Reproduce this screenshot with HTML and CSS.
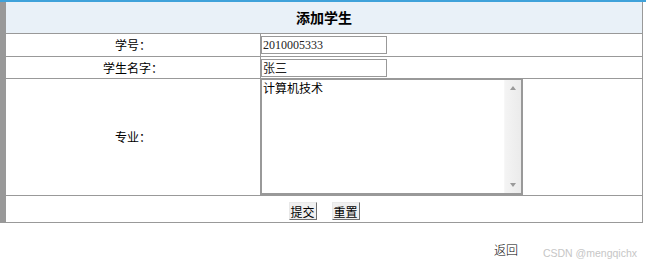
FILE: index.html
```html
<!DOCTYPE html>
<html lang="zh">
<head>
<meta charset="utf-8">
<title>添加学生</title>
<link rel="stylesheet" href="styles.css">
</head>
<body>
<div class="page">
  <form class="form">
    <table class="grid">
      <colgroup>
        <col class="col-label">
        <col class="col-field">
      </colgroup>
      <tr>
        <th class="title" colspan="2">添加学生</th>
      </tr>
      <tr class="row-a">
        <td class="label">学号：</td>
        <td class="field"><input class="text" type="text" value="2010005333"></td>
      </tr>
      <tr class="row-b">
        <td class="label">学生名字：</td>
        <td class="field"><input class="text" type="text" value="张三"></td>
      </tr>
      <tr class="row-c">
        <td class="label">专业：</td>
        <td class="field">
          <div class="area">
            <textarea class="area-input">计算机技术</textarea>
            <div class="scrollbar">
              <span class="arrow up"></span>
              <span class="arrow down"></span>
            </div>
          </div>
        </td>
      </tr>
      <tr class="row-d">
        <td class="actions" colspan="2">
          <div class="buttons">
            <button class="btn" type="submit">提交</button>
            <button class="btn" type="reset">重置</button>
          </div>
        </td>
      </tr>
    </table>
  </form>
  <div class="footer">
    <a class="back" href="#">返回</a>
    <span class="mark">CSDN @mengqichx</span>
  </div>
</div>
</body>
</html>
```

FILE: styles.css
```css
html, body {
  margin: 0;
  padding: 0;
  background: #fff;
}

body {
  font-family: "Noto Sans CJK SC", "Liberation Sans", sans-serif;
  font-size: 12px;
  color: #000;
}

.page {
  width: 646px;
  border-top: 2px solid #3fa2da;
}

.form {
  margin: 0;
}

.grid {
  border-spacing: 0;
  border-left: 6px solid #999;
  width: 643px;
  table-layout: fixed;
}

.col-label { width: 255px; }
.col-field { width: 382px; }

.grid td,
.grid th {
  padding: 0;
  border-right: 1px solid #999;
  border-bottom: 1px solid #999;
}

.title {
  height: 31px;
  background: #e9f1f8;
  font-size: 14px;
  font-weight: bold;
  text-align: center;
  line-height: 31px;
}

.label {
  text-align: center;
  line-height: 14px;
}

.field {
  text-align: left;
  vertical-align: middle;
}

.row-a td { height: 22px; }
.row-b td { height: 21px; }
.row-c td { height: 116px; }
.row-d td { height: 26px; }

.text {
  display: block;
  box-sizing: border-box;
  width: 126px;
  height: 18px;
  margin: 0;
  padding: 0 1px;
  border: 1px solid #999;
  font-family: "Liberation Serif", "Noto Sans CJK SC", serif;
  font-size: 12px;
  color: #222;
  background: #fff;
  outline: none;
}

.row-b .text {
  font-family: "Noto Sans CJK SC", sans-serif;
}

.area {
  display: flex;
  box-sizing: border-box;
  width: 262px;
  height: 116px;
  border: 1px solid #999;
  border-bottom-width: 2px;
  border-right-width: 2px;
  background: #fff;
}

.area-input {
  flex: 1;
  margin: 0;
  padding: 0 1px;
  border: 0;
  resize: none;
  overflow: hidden;
  font-family: "Noto Sans CJK SC", sans-serif;
  font-size: 12px;
  line-height: 15px;
  color: #000;
  outline: none;
}

.scrollbar {
  width: 16px;
  background: linear-gradient(to right, #f4f4f4, #ebebeb);
  border-left: 1px solid #f7f7f7;
  display: flex;
  flex-direction: column;
  justify-content: space-between;
  align-items: center;
  padding: 6px 0 6px;
}

.arrow {
  width: 0;
  height: 0;
  border-left: 3px solid transparent;
  border-right: 3px solid transparent;
}

.arrow.up {
  border-bottom: 4px solid #9a9a9a;
}

.arrow.down {
  border-top: 4px solid #9a9a9a;
}

.actions {
  text-align: center;
}

.buttons {
  display: flex;
  justify-content: center;
  gap: 15px;
  padding-top: 4px;
}

.btn {
  box-sizing: border-box;
  height: 18px;
  width: 28px;
  padding: 0;
  margin: 0;
  background: #f0f0f0;
  border: 1px solid;
  border-color: #e8e8e8 #6f6f6f #6f6f6f #e8e8e8;
  font-family: "Noto Sans CJK SC", sans-serif;
  font-size: 12px;
  line-height: 15px;
  color: #000;
}

.footer {
  display: flex;
  justify-content: flex-end;
  align-items: center;
  gap: 25px;
  margin-top: 18px;
  padding-right: 9px;
}

.back {
  color: #000;
  text-decoration: none;
  font-size: 12px;
  line-height: 14px;
  font-weight: 300;
}

.mark {
  font-family: "Liberation Sans", sans-serif;
  font-size: 10.5px;
  color: #c6c6c6;
  padding-top: 6px;
}
```
